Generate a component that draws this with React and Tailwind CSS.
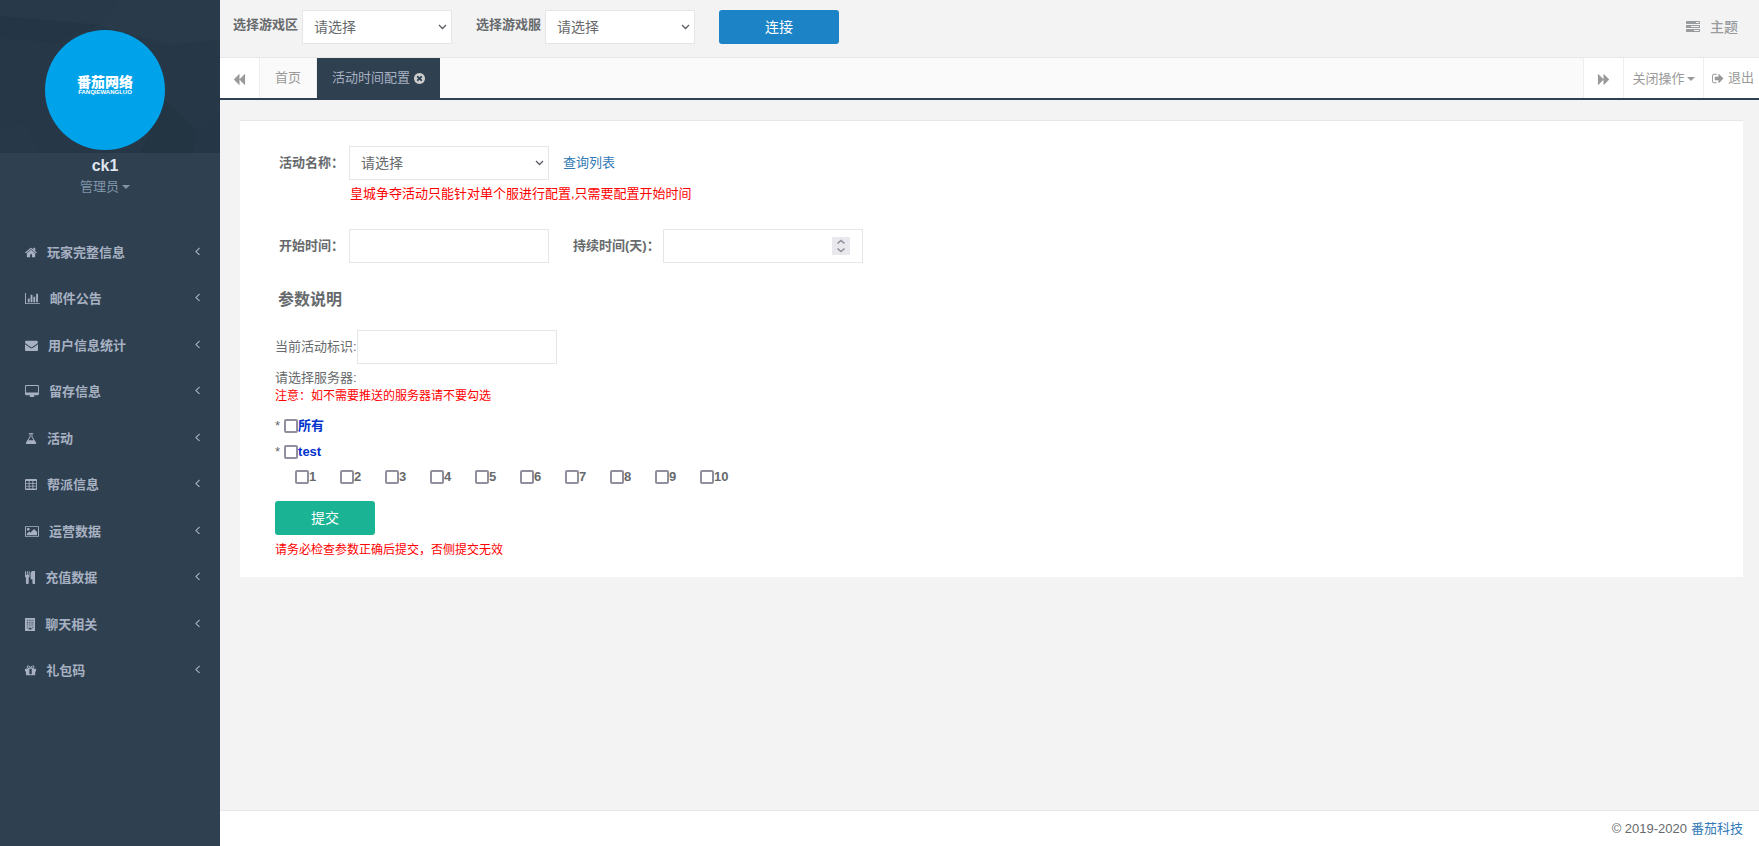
import { useState } from 'react';

const icons = {
  home: {
    box: '64 0 1664 1792',
    d: 'M1472 992v480q0 26-19 45t-45 19h-384v-384h-256v384h-384q-26 0-45-19t-19-45v-480q0-1 .5-3t.5-3l575-474 575 474q1 2 1 6zm223-69l-62 74q-8 9-21 11h-3q-13 0-21-7l-692-577-692 577q-12 8-24 7-13-2-21-11l-62-74q-8-10-7-23.5t11-21.5l719-599q32-26 76-26t76 26l244 204v-195q0-14 9-23t23-9h192q14 0 23 9t9 23v408l219 182q10 8 11 21.5t-7 23.5z',
  },
  chart: {
    box: '0 0 2048 1792',
    d: 'M640 896v512h-256v-512h256zm384-512v1024h-256v-1024h256zm1024 1152v128h-2048v-1536h128v1408h1920zm-640-896v768h-256v-768h256zm384-384v1152h-256v-1152h256z',
  },
  envelope: {
    box: '0 0 1792 1792',
    d: 'M1792 710v794q0 66-47 113t-113 47h-1472q-66 0-113-47t-47-113v-794q44 49 101 87 362 246 497 345 57 42 92.5 65.5t94.5 48 110 24.5h2q51 0 110-24.5t94.5-48 92.5-65.5q170-123 498-345 57-39 100-87zm0-294q0 79-49 151t-122 123q-376 261-468 325-10 7-42.5 31t-54 38.5-52 32.5-57.5 27-50 9h-2q-23 0-50-9t-57.5-27-52-32.5-54-38.5-42.5-31q-91-64-262-182.5t-205-142.5q-62-42-117-115.5t-55-136.5q0-78 41.5-130t118.5-52h1472q65 0 112.5 47t47.5 113z',
  },
  desktop: {
    box: '0 0 1920 1792',
    d: 'M1792 992v-832q0-13-9.5-22.5t-22.5-9.5h-1600q-13 0-22.5 9.5t-9.5 22.5v832q0 13 9.5 22.5t22.5 9.5h1600q13 0 22.5-9.5t9.5-22.5zm128-832v1088q0 66-47 113t-113 47h-544q0 37 16 77.5t32 71 16 43.5q0 26-19 45t-45 19h-512q-26 0-45-19t-19-45q0-14 16-44t32-70 16-78h-544q-66 0-113-47t-47-113v-1088q0-66 47-113t113-47h1600q66 0 113 47t47 113z',
  },
  flask: {
    box: '64 0 1664 1792',
    d: 'M640 128h512q26 0 45 19t19 45-19 45-45 19h-64v399l503 793q56 89 21.5 153t-140.5 64h-1152q-106 0-140.5-64t21.5-153l503-793v-399h-64q-26 0-45-19t-19-45 19-45 45-19zM812 722l-272 430h712l-272-430-20-31v-435h-128v435z',
  },
  table: {
    box: '64 0 1664 1792',
    d: 'M224 128h1344q66 0 113 47t47 113v1216q0 66-47 113t-113 47h-1344q-66 0-113-47t-47-113v-1216q0-66 47-113t113-47zM192 416v256h384v-256zM704 416v256h384v-256zM1216 416v256h384v-256zM192 800v256h384v-256zM704 800v256h384v-256zM1216 800v256h384v-256zM192 1184v256h384v-256zM704 1184v256h384v-256zM1216 1184v256h384v-256z',
  },
  picture: {
    box: '0 0 1920 1792',
    d: 'M640 576q0 80-56 136t-136 56-136-56-56-136 56-136 136-56 136 56 56 136zm1024 384v448h-1408v-192l320-320 160 160 512-512zm96-704h-1600q-13 0-22.5 9.5t-9.5 22.5v1216q0 13 9.5 22.5t22.5 9.5h1600q13 0 22.5-9.5t9.5-22.5v-1216q0-13-9.5-22.5t-22.5-9.5zm160 32v1216q0 66-47 113t-113 47h-1600q-66 0-113-47t-47-113v-1216q0-66 47-113t113-47h1600q66 0 113 47t47 113z',
  },
  cutlery: {
    box: '192 0 1408 1792',
    d: 'M832 64v640q0 61-35.5 111t-92.5 70v779q0 52-38 90t-90 38h-128q-52 0-90-38t-38-90v-779q-57-20-92.5-70t-35.5-111v-640q0-26 19-45t45-19 45 19 19 45v416q0 26 19 45t45 19 45-19 19-45v-416q0-26 19-45t45-19 45 19 19 45v416q0 26 19 45t45 19 45-19 19-45v-416q0-26 19-45t45-19 45 19 19 45zm768 0v1600q0 52-38 90t-90 38h-128q-52 0-90-38t-38-90v-512h-224q-13 0-22.5-9.5t-9.5-22.5v-800q0-132 94-226t226-94h256q26 0 45 19t19 45z',
  },
  building: {
    box: '192 0 1408 1792',
    d: 'M256 0h1280q26 0 45 19t19 45v1664q0 26-19 45t-45 19h-1280q-26 0-45-19t-19-45v-1664q0-26 19-45t45-19zM448 256v128h128v-128zM704 256v128h128v-128zM960 256v128h128v-128zM1216 256v128h128v-128zM448 512v128h128v-128zM704 512v128h128v-128zM960 512v128h128v-128zM1216 512v128h128v-128zM448 768v128h128v-128zM704 768v128h128v-128zM960 768v128h128v-128zM1216 768v128h128v-128zM448 1024v128h128v-128zM704 1024v128h128v-128zM960 1024v128h128v-128zM1216 1024v128h128v-128zM448 1280v128h128v-128zM704 1344v256h384v-256zM1216 1280v128h128v-128z',
  },
  gift: {
    box: '128 0 1536 1792',
    d: 'M1056 1356v-716h-320v716q0 25 18 38.5t46 13.5h192q28 0 46-13.5t18-38.5zm-456-844h195l-126-161q-26-31-69-31-40 0-68 28t-28 68 28 68 68 28zm688-96q0-40-28-68t-68-28q-43 0-69 31l-125 161h194q40 0 68-28t28-68zm376 256v320q0 14-9 23t-23 9h-96v416q0 40-28 68t-68 28h-1088q-40 0-68-28t-28-68v-416h-96q-14 0-23-9t-9-23v-320q0-14 9-23t23-9h440q-93 0-158.5-65.5t-65.5-158.5 65.5-158.5 158.5-65.5q107 0 168 77l128 165 128-165q61-77 168-77 93 0 158.5 65.5t65.5 158.5-65.5 158.5-158.5 65.5h440q14 0 23 9t9 23z',
  },
  angleLeft: {
    box: '580 384 640 1024',
    d: 'M1203 544q0 13-10 23l-393 393 393 393q10 10 10 23t-10 23l-50 50q-10 10-23 10t-23-10l-466-466q-10-10-10-23t10-23l466-466q10-10 23-10t23 10l50 50q10 10 10 23z',
  },
  tasks: {
    box: '0 0 1792 1792',
    d: 'M1024 1408h640v-128h-640v128zm-384-512h1024v-128h-1024v128zm640-512h384v-128h-384v128zm512 832v256q0 26-19 45t-45 19h-1664q-26 0-45-19t-19-45v-256q0-26 19-45t45-19h1664q26 0 45 19t19 45zm0-512v256q0 26-19 45t-45 19h-1664q-26 0-45-19t-19-45v-256q0-26 19-45t45-19h1664q26 0 45 19t19 45zm0-512v256q0 26-19 45t-45 19h-1664q-26 0-45-19t-19-45v-256q0-26 19-45t45-19h1664q26 0 45 19t19 45z',
  },
  backward: {
    box: '0 0 1792 1792',
    d: 'M1619 141q19-19 32-13t13 32v1472q0 26-13 32t-32-13l-710-710q-9-9-13-19v710q0 26-13 32t-32-13l-710-710q-19-19-19-45t19-45l710-710q19-19 32-13t13 32v710q4-10 13-19z',
  },
  signOut: {
    box: '0 0 1664 1792',
    d: 'M640 1440q0 4 1 20t.5 26.5-3 23.5-10 19.5-20.5 6.5h-320q-119 0-203.5-84.5t-84.5-203.5v-704q0-119 84.5-203.5t203.5-84.5h320q13 0 22.5 9.5t9.5 22.5q0 4 1 20t.5 26.5-3 23.5-10 19.5-20.5 6.5h-320q-66 0-113 47t-47 113v704q0 66 47 113t113 47h312l11.5 1 11.5 3 8 5.5 7 9 2 13.5zm928-544q0 26-19 45l-544 544q-19 19-45 19t-45-19-19-45v-288h-448q-26 0-45-19t-19-45v-384q0-26 19-45t45-19h448v-288q0-26 19-45t45-19 45 19l544 544q19 19 19 45z',
  },
  timesCircle: {
    box: '128 128 1536 1536',
    d: 'M1277 1122q0-26-19-45l-181-181 181-181q19-19 19-45 0-27-19-46l-90-90q-19-19-46-19-26 0-45 19l-181 181-181-181q-19-19-45-19-27 0-46 19l-90 90q-19 19-19 46 0 26 19 45l181 181-181 181q-19 19-19 45 0 27 19 46l90 90q19 19 46 19 26 0 45-19l181-181 181 181q19 19 45 19 27 0 46-19l90-90q19-19 19-46zm387-226q0 209-103 385.5t-279.5 279.5-385.5 103-385.5-103-279.5-279.5-103-385.5 103-385.5 279.5-279.5 385.5-103 385.5 103 279.5 279.5 103 385.5z',
  },
};

function Icon({ name, className }) {
  return (
    <svg viewBox={icons[name].box} className={className} fill="currentColor" aria-hidden="true">
      <path fillRule="evenodd" d={icons[name].d} />
    </svg>
  );
}

function Caret({ className }) {
  return (
    <svg viewBox="0 0 8 4" className={className} fill="currentColor" aria-hidden="true">
      <path d="M0 0h8L4 4z" />
    </svg>
  );
}

const menu = [
  { icon: 'home', name: '玩家完整信息' },
  { icon: 'chart', name: '邮件公告' },
  { icon: 'envelope', name: '用户信息统计' },
  { icon: 'desktop', name: '留存信息' },
  { icon: 'flask', name: '活动' },
  { icon: 'table', name: '帮派信息' },
  { icon: 'picture', name: '运营数据' },
  { icon: 'cutlery', name: '充值数据' },
  { icon: 'building', name: '聊天相关' },
  { icon: 'gift', name: '礼包码' },
];

const servers = [1, 2, 3, 4, 5, 6, 7, 8, 9, 10];

function Sidebar() {
  return (
    <aside className="w-[220px] shrink-0 bg-[#2f4050]">
      <div className="relative h-[153px] bg-[#263847]">
        <svg className="absolute inset-0 h-full w-full" viewBox="0 0 220 153" preserveAspectRatio="none" aria-hidden="true">
          <path d="M0 0h118L98 25 0 16z" fill="#283a49" />
          <path d="M118 0h102v40l-50 5-72-20z" fill="#293b4a" />
          <path d="M0 16l98 9-40 18-58-5z" fill="#243645" />
          <path d="M165 100l32 31-4 22h-53z" fill="#233443" />
          <path d="M197 131l23-18v40h-25z" fill="#253746" />
          <path d="M0 130l26-8 14 31H0z" fill="#273948" />
        </svg>
        <div className="relative flex justify-center pr-[10px] pt-[30px]">
          <div className="flex size-[120px] flex-col items-center rounded-full bg-[#00a2ea] pt-[46px] text-white">
            <span className="text-[14px] font-black leading-[13px]">番茄网络</span>
            <span className="text-[6px] font-bold leading-[6px]">FANQIEWANGLUO</span>
          </div>
        </div>
      </div>
      <div className="flex flex-col items-center pr-[10px] pt-[3px]">
        <strong className="text-[16px] leading-5 text-[#dfe4ed]">ck1</strong>
        <button type="button" className="mt-px flex items-center gap-[3px] text-[13px] leading-5 text-[#8095a8]">
          管理员
          <Caret className="h-1 w-2" />
        </button>
      </div>
      <nav className="mt-8 grid h-[465px] auto-rows-fr pl-[25px] pr-5">
        {menu.map((item) => (
          <a key={item.name} href="#" className="flex items-center text-[13px] font-semibold text-[#a7b1c2]">
            <Icon name={item.icon} className="mr-[10px] h-[13px] w-auto" />
            {item.name}
            <Icon name="angleLeft" className="ml-auto mb-[3px] h-2 w-auto" />
          </a>
        ))}
      </nav>
    </aside>
  );
}

function SelectBox({ id, className }) {
  return (
    <span className={className}>
      <select id={id} className="h-[34px] w-full appearance-none border border-[#e5e6e7] bg-white px-[11px] text-[14px] text-[#676a6c] outline-none">
        <option>请选择</option>
      </select>
      <svg className="pointer-events-none absolute right-[5px] top-[14px] h-[6px] w-[9px]" viewBox="0 0 9 6" fill="none" stroke="#5b5b66" strokeWidth="1.3" aria-hidden="true">
        <path d="M1 1l3.5 3.5L8 1" />
      </svg>
    </span>
  );
}

function TopBar() {
  return (
    <header className="flex h-[57px] items-start pl-[13px] pr-[21px] pt-[10px]">
      <label htmlFor="zone" className="text-[13px] font-bold leading-[30px]">选择游戏区</label>
      <SelectBox id="zone" className="relative ml-1 w-[150px]" />
      <label htmlFor="server" className="ml-6 text-[13px] font-bold leading-[30px]">选择游戏服</label>
      <SelectBox id="server" className="relative ml-1 w-[150px]" />
      <button type="button" className="ml-6 h-[34px] w-[120px] rounded-[3px] bg-[#1c84c6] text-[14px] text-white">连接</button>
      <a href="#" className="ml-auto flex h-[34px] items-center gap-[10px] text-[14px] font-medium text-[#999c9e]">
        <Icon name="tasks" className="size-[14px]" />
        主题
      </a>
    </header>
  );
}

function Tabs() {
  return (
    <div className="flex h-[43px] border-b-2 border-t border-b-[#2f4050] border-t-[#e7e7e7] bg-[#fafafa] text-[13px] text-[#999]">
      <button type="button" aria-label="上一个" className="flex w-10 items-center justify-center border-r border-[#eee] bg-white pt-[2px]">
        <Icon name="backward" className="size-[13px]" />
      </button>
      <a href="#" className="flex w-[57px] items-center justify-center border-r border-[#eee]">首页</a>
      <a href="#" className="flex w-[123px] items-center justify-center gap-1 bg-[#2f4050] text-[#a7b1c2]">
        活动时间配置
        <Icon name="timesCircle" className="size-[11px] text-[#ccc]" />
      </a>
      <button type="button" aria-label="下一个" className="ml-auto flex w-[41px] items-center justify-center border-x border-[#eee] bg-white pt-[2px]">
        <Icon name="backward" className="size-[13px] rotate-180" />
      </button>
      <button type="button" className="flex w-20 items-center justify-center gap-[2px] border-r border-[#eee] bg-white pt-[2px]">
        关闭操作
        <Caret className="h-1 w-2" />
      </button>
      <a href="#" className="flex w-[55px] items-center justify-end gap-1 bg-white pr-[5px]">
        <Icon name="signOut" className="h-[13px] w-auto" />
        退出
      </a>
    </div>
  );
}

function CheckItem({ label, className }) {
  return (
    <label className={className}>
      <input type="checkbox" className="size-[14px] shrink-0 appearance-none rounded-[2px] border-2 border-[#8f8f9d] bg-white checked:bg-[#1c84c6]" />
      {label}
    </label>
  );
}

function ConfigForm() {
  const [start, setStart] = useState('');
  const [days, setDays] = useState('');
  const [flag, setFlag] = useState('');

  return (
    <form className="border-t border-[#e7e7e7] bg-white pb-[18px] pl-[35px] pt-[25px] text-[13px]">
      <div className="flex items-center">
        <label htmlFor="activity" className="w-[74px] pl-1 font-bold">活动名称：</label>
        <SelectBox id="activity" className="relative w-[200px]" />
        <a href="#" className="ml-[14px] text-[#337ab7]">查询列表</a>
      </div>
      <p className="ml-[75px] mt-1 leading-5 text-[#f00]">皇城争夺活动只能针对单个服进行配置,只需要配置开始时间</p>

      <div className="mt-[25px] flex items-center">
        <label htmlFor="start" className="w-[74px] pl-1 font-bold">开始时间：</label>
        <input id="start" value={start} onChange={(e) => setStart(e.target.value)} className="h-[34px] w-[200px] border border-[#e5e6e7] px-3 outline-none" />
        <label htmlFor="days" className="ml-6 w-[90px] font-bold">持续时间(天)：</label>
        <span className="relative w-[200px]">
          <input
            id="days"
            type="number"
            value={days}
            onChange={(e) => setDays(e.target.value)}
            className="h-[34px] w-full border border-[#e5e6e7] px-3 outline-none [&::-webkit-inner-spin-button]:appearance-none"
          />
          <svg className="pointer-events-none absolute right-[13px] top-2 h-[18px] w-[18px] bg-[#e9e9ed]" viewBox="0 0 18 18" fill="none" stroke="#8f8f9d" strokeWidth="1.6" aria-hidden="true">
            <path d="M5.500 6.500L9 3.500l3.500 3M5.500 11.500l3.500 3 3.500-3" />
          </svg>
        </span>
      </div>

      <h4 className="mb-5 ml-[3px] mt-[27px] text-[16px] font-semibold leading-5">参数说明</h4>

      <div className="flex items-center">
        <label htmlFor="flag">当前活动标识:</label>
        <input id="flag" value={flag} onChange={(e) => setFlag(e.target.value)} className="h-[34px] w-[200px] border border-[#e5e6e7] px-3 outline-none" />
      </div>
      <p className="mt-[5px] leading-[18px]">请选择服务器:</p>
      <p className="text-[12px] leading-[18px] text-[#f00]">注意：如不需要推送的服务器请不要勾选</p>

      <div className="mt-2 flex h-[26px] items-center gap-1">
        *
        <CheckItem label="所有" className="flex items-center font-bold text-[#0033cc]" />
      </div>
      <div className="flex h-[26px] items-center gap-1">
        *
        <CheckItem label="test" className="flex items-center font-bold text-[#0033cc]" />
      </div>
      <div className="flex h-[24px] items-center pl-5">
        {servers.map((n) => (
          <CheckItem key={n} label={n} className="flex w-[45px] items-center font-bold" />
        ))}
      </div>

      <button type="button" className="mt-3 block h-[34px] w-[100px] rounded-[3px] bg-[#1ab394] text-[14px] text-white">提交</button>
      <p className="mt-[6px] text-[12px] leading-[18px] text-[#f00]">请务必检查参数正确后提交，否侧提交无效</p>
    </form>
  );
}

export default function App() {
  return (
    <div className="flex min-h-screen bg-[#f3f3f4] font-['Liberation_Sans','Noto_Sans_CJK_SC',sans-serif] text-[#676a6c]">
      <Sidebar />
      <div className="flex min-w-0 flex-1 flex-col">
        <TopBar />
        <Tabs />
        <main className="flex-1 pb-5 pl-5 pr-4 pt-5">
          <ConfigForm />
        </main>
        <footer className="flex h-9 items-center justify-end gap-1 border-t border-[#e7e7e7] bg-white pr-4 text-[13px]">
          © 2019-2020
          <a href="#" className="text-[#337ab7]">番茄科技</a>
        </footer>
      </div>
    </div>
  );
}
